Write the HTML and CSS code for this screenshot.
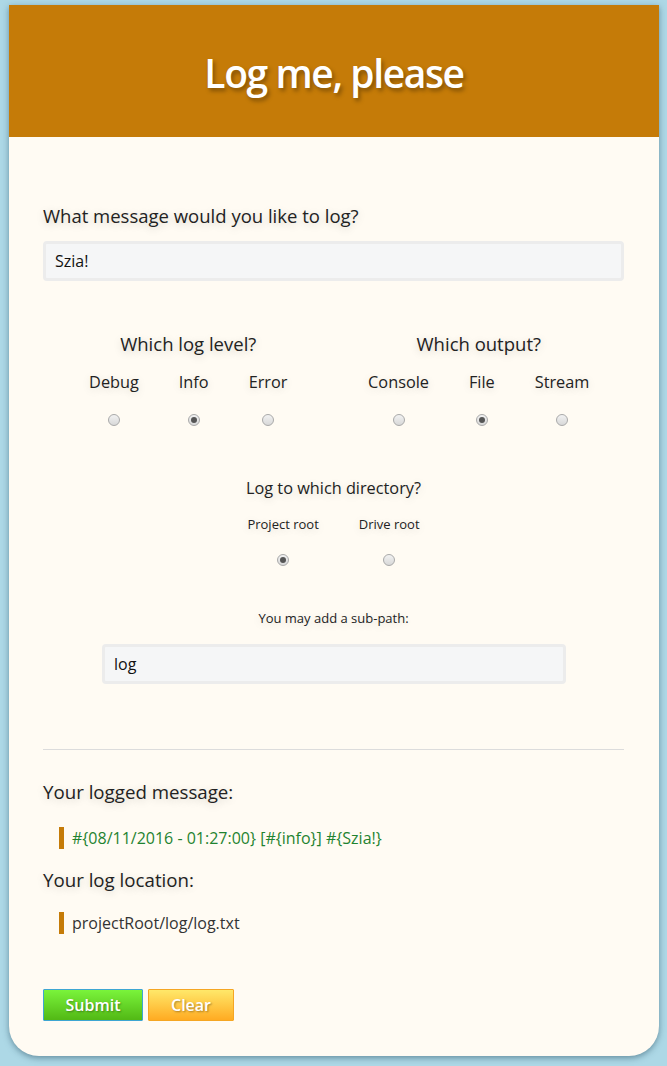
FILE: index.html
```html
<!DOCTYPE html>
<html>
<head>
<meta charset="utf-8">
<link rel="stylesheet" href="styles.css">
</head>
<body>
<div class="card">
  <header class="header"><h1 class="title">Log me, please</h1></header>
  <main class="content">
    <label class="q-label">What message would you like to log?</label>
    <div class="field">Szia!</div>

    <div class="groups">
      <div class="group">
        <div class="g-title">Which log level?</div>
        <div class="opts">
          <div class="opt"><span class="opt-l">Debug</span><span class="radio"></span></div>
          <div class="opt"><span class="opt-l">Info</span><span class="radio on"></span></div>
          <div class="opt"><span class="opt-l">Error</span><span class="radio"></span></div>
        </div>
      </div>
      <div class="group">
        <div class="g-title">Which output?</div>
        <div class="opts">
          <div class="opt"><span class="opt-l">Console</span><span class="radio"></span></div>
          <div class="opt"><span class="opt-l">File</span><span class="radio on"></span></div>
          <div class="opt"><span class="opt-l">Stream</span><span class="radio"></span></div>
        </div>
      </div>
    </div>

    <div class="dir">
      <div class="d-title">Log to which directory?</div>
      <div class="opts d-opts">
        <div class="opt small"><span class="opt-l">Project root</span><span class="radio on"></span></div>
        <div class="opt small"><span class="opt-l">Drive root</span><span class="radio"></span></div>
      </div>
      <div class="sub-label">You may add a sub-path:</div>
      <div class="field sub-field">log</div>
    </div>

    <hr class="sep">

    <h2 class="r-title">Your logged message:</h2>
    <div class="quote green">#{08/11/2016 - 01:27:00} [#{info}] #{Szia!}</div>
    <h2 class="r-title loc">Your log location:</h2>
    <div class="quote path">projectRoot/log/log.txt</div>

    <div class="buttons">
      <button class="btn submit">Submit</button>
      <button class="btn clear">Clear</button>
    </div>
  </main>
</div>
</body>
</html>
```
FILE: styles.css
```css
html, body {
  margin: 0;
  padding: 0;
}
body {
  background: #add8e6;
  font-family: "Open Sans", "Noto Sans", sans-serif;
  color: #222;
  padding: 5px 8px 10px 9px;
}
.card {
  width: 650px;
  height: 1051px;
  background: #fffbf3;
  border-radius: 0 0 30px 30px;
  box-shadow: 0 2px 6px rgba(40, 80, 100, 0.55);
  overflow: hidden;
  display: flex;
  flex-direction: column;
}
.header {
  background: #c57b08;
  height: 132px;
  display: flex;
  align-items: center;
  justify-content: center;
}
.title {
  margin: 0;
  color: #fff;
  font-weight: 600;
  font-size: 39px;
  letter-spacing: -1.4px;
  text-shadow: 2px 3px 4px rgba(0, 0, 0, 0.35);
  transform: translateY(1px);
}
.content {
  padding: 67px 35px 0 34px;
  display: flex;
  flex-direction: column;
}
.q-label {
  font-size: 18.5px;
  line-height: 24px;
  text-shadow: 0 2px 8px rgba(0, 0, 0, 0.18);
  margin-bottom: 13px;
}
.field {
  box-sizing: border-box;
  height: 40px;
  background: #f5f6f7;
  border: 3px solid #ececec;
  border-radius: 4px;
  padding: 0 9px;
  font-size: 16px;
  line-height: 34px;
  color: #111;
}
.groups {
  display: grid;
  grid-template-columns: 1fr 1fr;
  margin-top: 51px;
}
.group {
  display: flex;
  flex-direction: column;
  align-items: center;
}
.g-title {
  font-size: 18.5px;
  line-height: 24px;
  text-shadow: 0 2px 8px rgba(0, 0, 0, 0.18);
}
.opts {
  display: flex;
  gap: 40px;
  margin-top: 15px;
}
.opt {
  display: flex;
  flex-direction: column;
  align-items: center;
}
.opt-l {
  font-size: 16.3px;
  line-height: 22px;
  text-shadow: 0 2px 8px rgba(0, 0, 0, 0.15);
}
.radio {
  box-sizing: border-box;
  width: 12px;
  height: 12px;
  border-radius: 50%;
  border: 1px solid #a9a9a9;
  background: linear-gradient(#f2f2f2, #d8d8d8);
  margin-top: 21px;
  position: relative;
}
.radio.on::after {
  content: "";
  position: absolute;
  left: 2px;
  top: 2px;
  width: 6px;
  height: 6px;
  border-radius: 50%;
  background: #555;
}
.dir {
  display: flex;
  flex-direction: column;
  align-items: center;
  margin-top: 51px;
}
.d-title {
  font-size: 16.3px;
  line-height: 22px;
  text-shadow: 0 2px 8px rgba(0, 0, 0, 0.15);
}
.opts.d-opts {
  margin-top: 16px;
}
.opt.small .opt-l {
  font-size: 13px;
  line-height: 18px;
}
.opt.small .radio { margin-top: 21px; }
.sub-label {
  font-size: 13px;
  line-height: 18px;
  margin-top: 43px;
  text-shadow: 0 2px 8px rgba(0, 0, 0, 0.15);
}
.sub-field {
  align-self: stretch;
  margin: 17px 58px 0 59px;
}
.sep {
  border: 0;
  border-top: 1px solid #dcdcdc;
  margin: 65px 0 0;
}
.r-title {
  margin: 29px 0 0;
  font-weight: 400;
  font-size: 18.7px;
  line-height: 26px;
  text-shadow: 0 2px 8px rgba(0, 0, 0, 0.18);
}
.r-title.loc { margin-top: 18px; }
.quote {
  margin: 22px 0 0 16px;
  border-left: 5px solid #c57b08;
  padding-left: 8px;
  font-size: 16px;
  line-height: 22px;
  color: #333;
}
.quote.path { margin-top: 19px; }
.quote.green { color: #1f8330; }
.buttons {
  display: flex;
  gap: 5px;
  margin-top: 55px;
}
.btn {
  font-family: "Open Sans", sans-serif;
  font-weight: 600;
  font-size: 16px;
  color: #fff;
  text-shadow: 1px 1px 2px rgba(0, 0, 0, 0.35);
  height: 32px;
  border-radius: 1px;
  padding: 0;
}
.submit {
  width: 100px;
  background: linear-gradient(#7af43b, #52b815);
  border: 1px solid #3ea6d2;
}
.clear {
  width: 86px;
  background: linear-gradient(#ffe86a, #ffab22);
  border: 1px solid #f5a623;
}
```
